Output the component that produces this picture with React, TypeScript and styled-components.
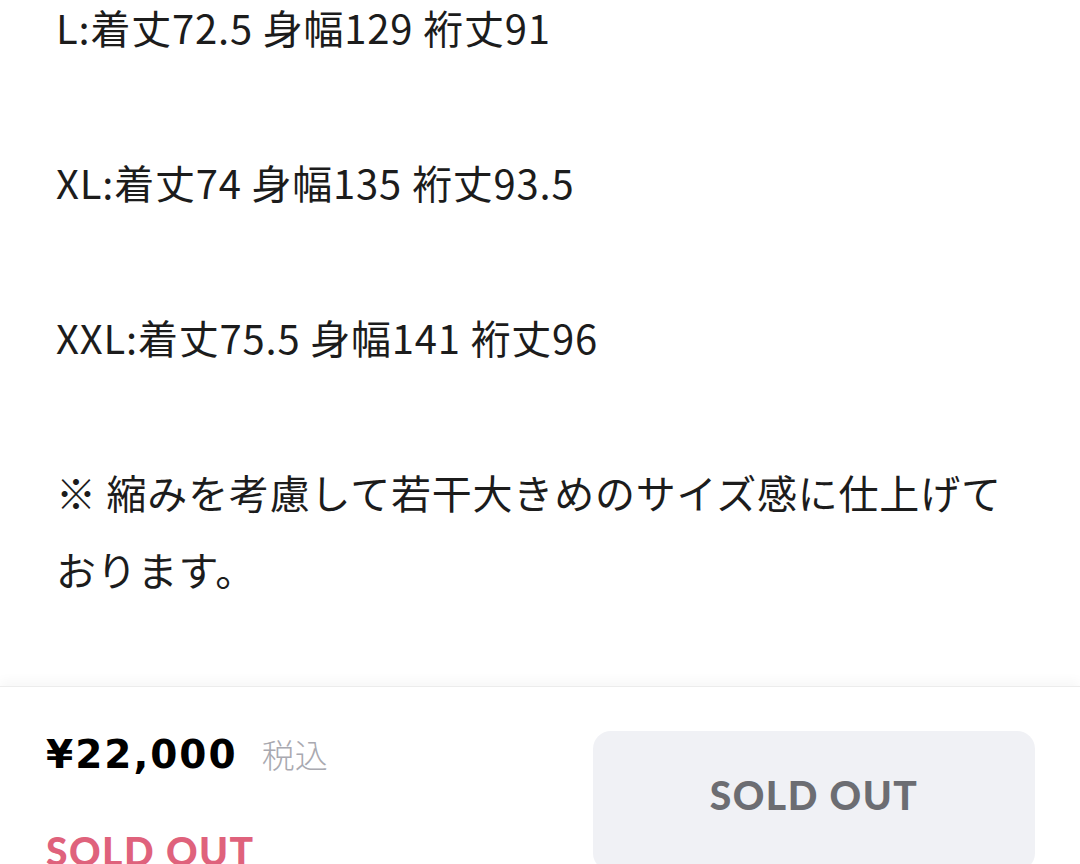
import styled, {createGlobalStyle} from "styled-components";

const GlobalStyle = createGlobalStyle`
    html, body {
        margin: 0;
        padding: 0;
        background: #fff;
    }
    body {
        height: 864px;
        overflow: hidden;
        font-family: Lato, "Noto Sans CJK JP", sans-serif;
        color: #1c1c1c;
    }
`

const StyledPageDiv = styled.div`
    display: flex;
    flex-direction: column;
    height: 864px;
`

const StyledDescriptionDiv = styled.div`
    flex: 1;
    min-height: 0;
    margin-top: -11px;
    padding: 0 60px 0 56px;
    font-family: "Noto Sans CJK JP", sans-serif;
    font-size: 40px;
    line-height: 77px;
    letter-spacing: 0.8px;
`

const StyledParagraph = styled.p`
    margin: 0 0 78px;

    &:last-child {
        margin-bottom: 0;
    }
`

const StyledBottomBarDiv = styled.div`
    flex-shrink: 0;
    display: flex;
    justify-content: space-between;
    align-items: flex-start;
    height: 178px;
    padding: 44px 45px 0 46px;
    box-sizing: border-box;
    border-top: 1px solid #ececec;
    box-shadow: 0 -6px 10px rgba(0, 0, 0, 0.03);
    overflow: hidden;
`

const StyledPriceColumnDiv = styled.div`
    display: flex;
    flex-direction: column;
`

const StyledPriceRowDiv = styled.div`
    display: flex;
    align-items: baseline;
    gap: 24px;
    margin-top: -1px;
`

const StyledPriceSpan = styled.span`
    font-family: "DejaVu Sans", sans-serif;
    font-size: 39px;
    font-weight: 700;
    color: #000;
    letter-spacing: 2px;
`

const StyledTaxSpan = styled.span`
    font-family: "Noto Sans CJK JP", sans-serif;
    font-size: 33px;
    font-weight: 300;
    color: #a9a9b0;
`

const StyledSoldOutSpan = styled.span<{ $tone: "pink" | "gray" }>`
    font-size: 39px;
    font-weight: 900;
    letter-spacing: 1.5px;
    color: ${p => p.$tone === "pink" ? "#df627c" : "#6c6d72"};
`

const StyledPinkLabelDiv = styled.div`
    margin-top: 50px;
`

const StyledSoldOutButton = styled.button`
    width: 442px;
    height: 140px;
    border: none;
    border-radius: 18px;
    background: #f0f1f5;
    display: flex;
    align-items: center;
    justify-content: center;
    padding: 0 0 12px;
    font-family: inherit;
`

const sizes = [
    "L:着丈72.5 身幅129 裄丈91",
    "XL:着丈74 身幅135 裄丈93.5",
    "XXL:着丈75.5 身幅141 裄丈96",
    "※ 縮みを考慮して若干大きめのサイズ感に仕上げております。",
]

export default function App() {
    return <>
        <GlobalStyle/>
        <StyledPageDiv>
            <StyledDescriptionDiv>
                {
                    sizes.map(line => <StyledParagraph key={line}>{line}</StyledParagraph>)
                }
            </StyledDescriptionDiv>

            <StyledBottomBarDiv>
                <StyledPriceColumnDiv>
                    <StyledPriceRowDiv>
                        <StyledPriceSpan>¥22,000</StyledPriceSpan>
                        <StyledTaxSpan>税込</StyledTaxSpan>
                    </StyledPriceRowDiv>
                    <StyledPinkLabelDiv>
                        <StyledSoldOutSpan $tone="pink">SOLD OUT</StyledSoldOutSpan>
                    </StyledPinkLabelDiv>
                </StyledPriceColumnDiv>

                <StyledSoldOutButton disabled>
                    <StyledSoldOutSpan $tone="gray">SOLD OUT</StyledSoldOutSpan>
                </StyledSoldOutButton>
            </StyledBottomBarDiv>
        </StyledPageDiv>
    </>
}
